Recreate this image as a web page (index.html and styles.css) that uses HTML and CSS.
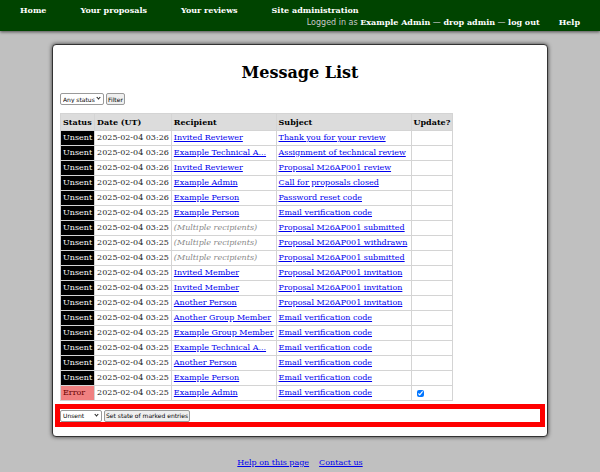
FILE: index.html
```html
<!DOCTYPE html>
<html lang="en">
<head>
  <meta charset="UTF-8" />
  <title>Message List</title>
  <link rel="stylesheet" href="styles.css">
</head>
<body>
  <header class="topbar">
    <nav class="main-nav">
      <a href="#">Home</a>
      <a href="#">Your proposals</a>
      <a href="#">Your reviews</a>
      <a href="#">Site administration</a>
    </nav>
    <div class="user-nav">
      <span class="login">Logged in as <a href="#">Example Admin</a> &mdash; <a href="#">drop admin</a> &mdash; <a href="#">log out</a></span>
      <a href="#">Help</a>
    </div>
  </header>

  <main class="page">
    <h1>Message List</h1>

    <form class="filter">
      <span class="select-wrap">
        <select class="status-select">
          <option>Any status</option>
        </select>
      </span>
      <button type="submit">Filter</button>
    </form>

    <table class="messages">
      <tr>
        <th>Status</th>
        <th>Date (UT)</th>
        <th>Recipient</th>
        <th class="subj">Subject</th>
        <th>Update?</th>
      </tr>
      <tr><td class="st-unsent">Unsent</td><td>2025-02-04 03:26</td><td><a href="#">Invited Reviewer</a></td><td><a href="#">Thank you for your review</a></td><td></td></tr>
      <tr><td class="st-unsent">Unsent</td><td>2025-02-04 03:26</td><td><a href="#">Example Technical A...</a></td><td><a href="#">Assignment of technical review</a></td><td></td></tr>
      <tr><td class="st-unsent">Unsent</td><td>2025-02-04 03:26</td><td><a href="#">Invited Reviewer</a></td><td><a href="#">Proposal M26AP001 review</a></td><td></td></tr>
      <tr><td class="st-unsent">Unsent</td><td>2025-02-04 03:26</td><td><a href="#">Example Admin</a></td><td><a href="#">Call for proposals closed</a></td><td></td></tr>
      <tr><td class="st-unsent">Unsent</td><td>2025-02-04 03:26</td><td><a href="#">Example Person</a></td><td><a href="#">Password reset code</a></td><td></td></tr>
      <tr><td class="st-unsent">Unsent</td><td>2025-02-04 03:25</td><td><a href="#">Example Person</a></td><td><a href="#">Email verification code</a></td><td></td></tr>
      <tr><td class="st-unsent">Unsent</td><td>2025-02-04 03:25</td><td class="multi">(Multiple recipients)</td><td><a href="#">Proposal M26AP001 submitted</a></td><td></td></tr>
      <tr><td class="st-unsent">Unsent</td><td>2025-02-04 03:25</td><td class="multi">(Multiple recipients)</td><td><a href="#">Proposal M26AP001 withdrawn</a></td><td></td></tr>
      <tr><td class="st-unsent">Unsent</td><td>2025-02-04 03:25</td><td class="multi">(Multiple recipients)</td><td><a href="#">Proposal M26AP001 submitted</a></td><td></td></tr>
      <tr><td class="st-unsent">Unsent</td><td>2025-02-04 03:25</td><td><a href="#">Invited Member</a></td><td><a href="#">Proposal M26AP001 invitation</a></td><td></td></tr>
      <tr><td class="st-unsent">Unsent</td><td>2025-02-04 03:25</td><td><a href="#">Invited Member</a></td><td><a href="#">Proposal M26AP001 invitation</a></td><td></td></tr>
      <tr><td class="st-unsent">Unsent</td><td>2025-02-04 03:25</td><td><a href="#">Another Person</a></td><td><a href="#">Proposal M26AP001 invitation</a></td><td></td></tr>
      <tr><td class="st-unsent">Unsent</td><td>2025-02-04 03:25</td><td><a href="#">Another Group Member</a></td><td><a href="#">Email verification code</a></td><td></td></tr>
      <tr><td class="st-unsent">Unsent</td><td>2025-02-04 03:25</td><td><a href="#">Example Group Member</a></td><td><a href="#">Email verification code</a></td><td></td></tr>
      <tr><td class="st-unsent">Unsent</td><td>2025-02-04 03:25</td><td><a href="#">Example Technical A...</a></td><td><a href="#">Email verification code</a></td><td></td></tr>
      <tr><td class="st-unsent">Unsent</td><td>2025-02-04 03:25</td><td><a href="#">Another Person</a></td><td><a href="#">Email verification code</a></td><td></td></tr>
      <tr><td class="st-unsent">Unsent</td><td>2025-02-04 03:25</td><td><a href="#">Example Person</a></td><td><a href="#">Email verification code</a></td><td></td></tr>
      <tr><td class="st-error">Error</td><td>2025-02-04 03:25</td><td><a href="#">Example Admin</a></td><td><a href="#">Email verification code</a></td><td><input type="checkbox" class="mark" checked /></td></tr>
    </table>

    <form class="update-form">
      <span class="select-wrap">
        <select class="state-select">
          <option>Unsent</option>
        </select>
      </span>
      <button type="submit">Set state of marked entries</button>
    </form>
  </main>

  <footer class="bottom-links">
    <a href="#">Help on this page</a>
    <a href="#">Contact us</a>
  </footer>
</body>
</html>
```

FILE: styles.css
```css
body {
  margin: 0;
  background-color: #c0c0c0;
  font-family: 'DejaVu Serif', serif;
  font-size: 8px;
  color: #000;
}

a {
  color: #0000ee;
}

.topbar {
  background-color: #004400;
  color: white;
  padding: 4px 20px 2px 20px;
  box-shadow: 0 1px 3px rgba(0,0,0,0.6);
  line-height: 12px;
}

.topbar a {
  color: white;
  font-weight: bold;
  text-decoration: none;
}

.main-nav {
  display: flex;
  gap: 34px;
}

.user-nav {
  display: flex;
  justify-content: flex-end;
  gap: 19px;
}

.login {
  color: #c8c8c8;
  font-family: 'DejaVu Sans', sans-serif;
}

.login a {
  font-family: 'DejaVu Serif', serif;
}

.page {
  width: 480px;
  margin: 13px auto 0 auto;
  padding: 0 7px 14px 7px;
  background-color: white;
  border: 1px solid #333;
  border-radius: 4px;
  box-shadow: 0 0 4px rgba(0,0,0,0.7);
}

.page h1 {
  margin: 18px 0 11px 0;
  font-size: 16px;
  line-height: 19px;
  text-align: center;
}

.filter, .update-form {
  display: flex;
  align-items: center;
  gap: 2px;
}

.select-wrap {
  position: relative;
  display: inline-block;
  height: 12px;
}

.select-wrap::after {
  content: "";
  position: absolute;
  right: 4px;
  top: 3px;
  width: 2px;
  height: 2px;
  border-right: 1px solid #222;
  border-bottom: 1px solid #222;
  transform: rotate(45deg);
  pointer-events: none;
}

select, button {
  font-family: 'DejaVu Sans', sans-serif;
  font-size: 6px;
  height: 12px;
  margin: 0;
  border: 1px solid #9a9a9a;
  border-radius: 2px;
  color: #000;
  vertical-align: top;
}

select {
  appearance: none;
  -webkit-appearance: none;
  background-color: white;
  padding: 0 8px 0 2px;
}

button {
  background-color: #efefef;
  padding: 0 1px;
}

.status-select {
  width: 44px;
}

.state-select {
  width: 42px;
}

.messages {
  margin-top: 8px;
  border-collapse: collapse;
  line-height: 12px;
}

.messages th, .messages td {
  border: 1px solid #d4d4d4;
  padding: 1px 2px;
  text-align: left;
  white-space: nowrap;
}

.messages th {
  background-color: #dcdcdc;
  padding: 2px 2px;
}

.messages th.subj {
  width: 130px;
}

.messages td {
  color: #222;
}

.messages td.st-unsent {
  background-color: #000;
  color: white;
}

.messages td.st-error {
  background-color: #f08080;
  color: #600;
}

.messages td.multi {
  color: #888;
  font-style: italic;
}

.mark {
  width: 7px;
  height: 7px;
  margin: 0 0 0 3px;
  vertical-align: middle;
}

.update-form {
  height: 13px;
  margin-top: 8px;
  outline: 5px solid red;
}

.bottom-links {
  display: flex;
  justify-content: center;
  gap: 10px;
  margin-top: 20px;
  line-height: 12px;
}
```
